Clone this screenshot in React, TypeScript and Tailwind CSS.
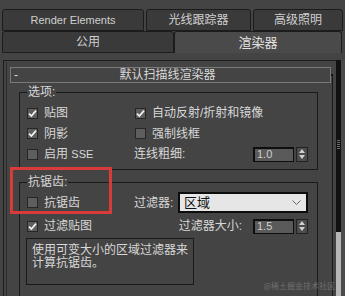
import React from 'react';

const Check = ({ checked }: { checked?: boolean }) => (
  <div className="w-[11px] h-[11px] bg-[#5e5e5e] border border-[#262626] flex items-center justify-center shrink-0">
    {checked && (
      <svg width="9" height="9" viewBox="0 0 9 9">
        <path d="M1 4.6 L3.4 7 L8 1.6" fill="none" stroke="#f2f2f2" strokeWidth="1.7" />
      </svg>
    )}
  </div>
);

const CheckItem = ({ label, checked }: { label: string; checked?: boolean }) => (
  <div className="flex items-center gap-[6px]">
    <Check checked={checked} />
    <span>{label}</span>
  </div>
);

const Spinner = ({ value }: { value: string }) => (
  <div className="flex items-center gap-[2px]">
    <div className="w-[41px] h-[15px] bg-[#5a5a5a] border border-[#0e0e0e] border-t-2 border-l-2 text-[11px] leading-[11px] text-[#cfcfcf] pl-[2px] flex items-center">
      {value}
    </div>
    <div className="w-[12px] h-[15px] bg-[#4c4c4c] border border-[#222] flex flex-col items-center justify-center gap-[2px]">
      <svg width="6" height="4" viewBox="0 0 6 4">
        <path d="M0 4 L3 0 L6 4 Z" fill="#d0d0d0" />
      </svg>
      <svg width="6" height="4" viewBox="0 0 6 4">
        <path d="M0 0 L3 4 L6 0 Z" fill="#d0d0d0" />
      </svg>
    </div>
  </div>
);

const Group = ({ label, className, children }: { label: string; className: string; children: React.ReactNode }) => (
  <div className={`relative ml-[9px] w-[299px] border border-[#1a1a1a] shrink-0 ${className}`}>
    <span className="absolute left-[7px] top-[-8px] px-[1px] bg-[#444444] leading-[14px]">{label}</span>
    {children}
  </div>
);

const Tab = ({ label, className }: { label: string; className: string }) => (
  <div
    className={`h-full rounded-t-[3px] border border-[#1c1c1c] flex items-center justify-center text-[#cfcfcf] ${className}`}
  >
    {label}
  </div>
);

export default function App() {
  return (
    <div className="relative w-[345px] h-[296px] bg-[#444444] overflow-hidden flex flex-col text-[12px] text-[#d8d8d8] font-['Liberation_Sans','Noto_Sans_CJK_SC',sans-serif]">
      {/* Tabs */}
      <div className="pt-[9px] shrink-0">
        <div className="flex h-[22px] pl-[2px] gap-[2px]">
          <Tab label="Render Elements" className="w-[142px] bg-[#3a3a3a] text-[11px]" />
          <Tab label="光线跟踪器" className="w-[105px] bg-[#3a3a3a]" />
          <Tab label="高级照明" className="w-[90px] bg-[#3a3a3a]" />
        </div>
        <div className="flex h-[22px] pl-[2px]">
          <Tab label="公用" className="w-[172px] bg-[#3a3a3a]" />
          <div className="h-full w-[168px] rounded-t-[3px] border border-b-0 border-[#1c1c1c] bg-[#4a4a4a] flex items-center justify-center text-[#e2e2e2] text-[13px]">
            渲染器
          </div>
        </div>
      </div>
      <div className="h-[7px] shrink-0" />

      {/* Panel */}
      <div className="flex-1 min-h-0 flex overflow-hidden">
        <div className="ml-[3px] w-[333px] border-l border-t border-[#1c1c1c] flex">
          <div className="flex-1 pl-[2px] pt-[1px] overflow-hidden">
            <div className="h-full border-l border-[#2a2a2a] pl-[3px] pt-[5px] flex flex-col">
              {/* Rollout header */}
              <div className="w-[321px] h-[16px] border border-[#7a7a7a] flex items-center shrink-0">
                <span className="w-[12px] pl-[3px] leading-[12px]">-</span>
                <span className="flex-1 text-center pr-[18px] leading-[14px]">默认扫描线渲染器</span>
              </div>

              {/* Options */}
              <Group label="选项:" className="mt-[9px] h-[78px] pt-[10px] pl-[7px] pr-[9px]">
                <div className="grid grid-cols-[108px_1fr]">
                  <div className="h-[20px] flex items-center"><CheckItem label="贴图" checked /></div>
                  <div className="h-[20px] flex items-center"><CheckItem label="自动反射/折射和镜像" checked /></div>
                  <div className="h-[21px] flex items-center"><CheckItem label="阴影" checked /></div>
                  <div className="h-[21px] flex items-center"><CheckItem label="强制线框" /></div>
                  <div className="h-[20px] flex items-center">
                    <div className="flex items-center gap-[6px]">
                      <Check />
                      <span>启用 <span className="text-[11px]">SSE</span></span>
                    </div>
                  </div>
                  <div className="h-[20px] flex items-center justify-between -ml-px">
                    <span>连线粗细:</span>
                    <Spinner value="1.0" />
                  </div>
                </div>
              </Group>

              {/* Antialiasing */}
              <Group label="抗锯齿:" className="mt-[12px] h-[130px] pt-[9px] pl-[7px] pr-[9px]">
                <div className="grid grid-cols-[108px_1fr]">
                  <div className="h-[21px] flex items-center"><CheckItem label="抗锯齿" /></div>
                  <div className="h-[21px] flex items-center -ml-px">
                    <span>过滤器:</span>
                    <div className="ml-auto w-[130px] h-[21px] bg-[#e6e6e6] border-2 border-[#0d0d0d] flex items-center pl-[4px] pr-[5px] text-[#111] text-[13px]">
                      <span className="flex-1">区域</span>
                      <svg width="9" height="5" viewBox="0 0 9 5">
                        <path d="M0.5 0.5 L4.5 4.5 L8.5 0.5" fill="none" stroke="#666" strokeWidth="1" />
                      </svg>
                    </div>
                  </div>
                  <div className="mt-[5px] h-[16px] flex items-center"><CheckItem label="过滤贴图" checked /></div>
                  <div className="mt-[5px] h-[16px] flex items-center justify-end gap-[11px]">
                    <span>过滤器大小:</span>
                    <Spinner value="1.5" />
                  </div>
                </div>
                <div className="mt-[4px] -ml-px w-[168px] h-[47px] border border-[#1a1a1a] px-[5px] pt-[5px] leading-[13px]">
                  使用可变大小的区域过滤器来
                  <br />
                  计算抗锯齿。
                </div>
              </Group>
            </div>
          </div>
          {/* Track line */}
          <div className="w-[4px] pt-[13px]">
            <div className="h-full border-l border-[#1a1a1a] relative">
              <div className="absolute left-[-2px] top-0 w-[2px] h-[2px] bg-[#111]" />
            </div>
          </div>
        </div>

        {/* Scrollbar */}
        <div className="w-[5px] flex flex-col">
          <div className="flex-1 bg-[#111111] flex flex-col items-center pt-[80px] gap-[1px]">
            <div className="w-[3px] h-px bg-[#6a6a6a]" />
            <div className="w-[3px] h-px bg-[#6a6a6a]" />
            <div className="w-[3px] h-px bg-[#6a6a6a]" />
            <div className="w-[3px] h-px bg-[#6a6a6a]" />
            <div className="w-[3px] h-px bg-[#6a6a6a]" />
          </div>
          <div className="h-[64px] bg-[#b6b6b6]" />
        </div>
        <div className="w-[4px] bg-[#4a4a4a]" />
      </div>

      {/* Highlight box */}
      <div className="absolute left-[10px] top-[167px] w-[102px] h-[47px] border-[3px] border-[#d93a3a]" />

      {/* Watermark */}
      <div className="absolute right-[10px] bottom-[6px] text-[8px] leading-[8px] text-[#707070] font-['Noto_Sans_CJK_SC',sans-serif]">
        @稀土掘金技术社区
      </div>
    </div>
  );
}
